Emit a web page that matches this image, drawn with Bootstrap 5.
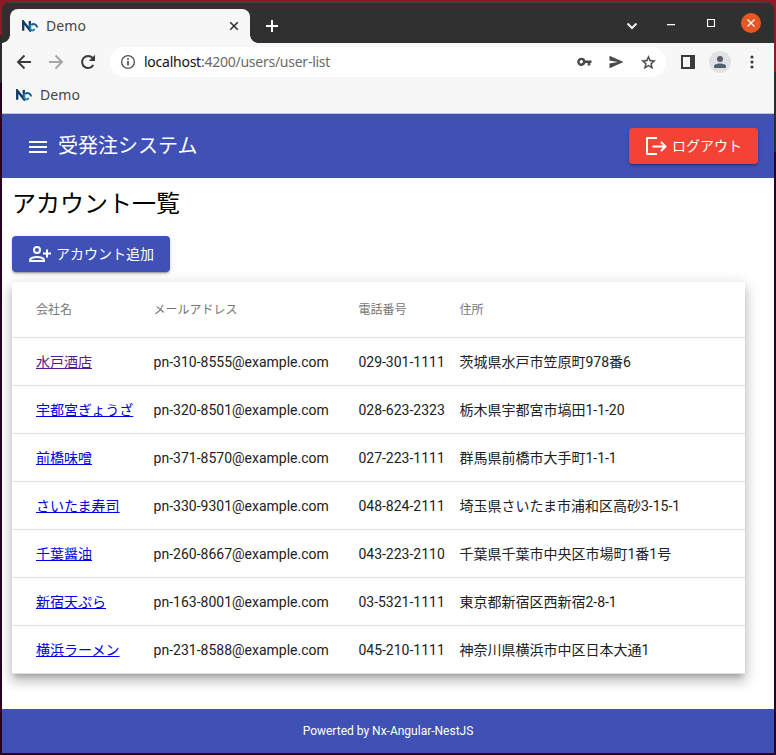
<!DOCTYPE html>
<html lang="ja">
<head>
<meta charset="utf-8">
<title>Demo</title>
<link rel="stylesheet" href="https://cdn.jsdelivr.net/npm/bootstrap@5.3.0/dist/css/bootstrap.min.css">
<style>
body{width:776px;height:755px;padding:2px;overflow:hidden;font-family:Roboto,"Noto Sans CJK JP",sans-serif;
background:linear-gradient(90deg,transparent 50%,#8d1b26 50%) 0 0/100% 72px no-repeat,linear-gradient(90deg,transparent 50%,#2b2b2b 50%) 0 72px/100% 80px no-repeat,linear-gradient(#8d1b26,#8d1b26) 0 0/100% 35px no-repeat,linear-gradient(#2b2b2b,#2b2b2b) 0 35px/100% 48px no-repeat,#28021f}
svg{display:block;flex:none}
.window{height:751px;border-radius:8px 8px 0 0}
.tabstrip{height:41px;background:#303030;border-top:1px solid #444;padding-left:8px}
.tab{width:240px;height:34px;margin-top:6px;background:#f7f7f7;border-radius:8px 8px 0 0;padding:0 11px 0 12px;position:relative}
.tab::before,.tab::after{content:"";position:absolute;bottom:0;width:8px;height:8px}
.tab::before{left:-8px;background:radial-gradient(circle at 0 0,transparent 7.5px,#f7f7f7 8px)}
.tab::after{right:-8px;background:radial-gradient(circle at 100% 0,transparent 7.5px,#f7f7f7 8px)}
.plus{margin:17px 0 0 16px}
.controls{height:40px;padding-right:13px}
.chev{margin:6px 29px 0 0}
.mini{margin:4px 32px 0 0}
.maxi{margin-right:26px}
.ui{font-family:"Noto Sans",sans-serif;font-size:14px;line-height:20px;color:#454746}
.demo-label{letter-spacing:.1px}
.chrome{height:71px;background:#f7f7f7;border-bottom:1px solid #c4c4c4}
.toolbar-row{height:38px;padding:0 14px}
.bookmarks{height:28px;padding-left:14px}
.omnibox{width:556px;height:30px;background:#fff;margin-left:14px;padding:0 9px 0 10px}
.url{margin-left:8px;color:#6a6a6a;letter-spacing:-.25px}
.url b{font-weight:400;color:#111}
.gap17{margin-left:17px}
.avatar{width:22px;height:22px;background:#e1e1e4;margin-left:14px}
.panel{margin-left:15px}
.dots{margin-left:19px}
.close-btn{width:20px;height:20px;background:#e9561f}
.appbar{height:64px;background:#3f51b5;padding:0 16px 0 26px}
.apptitle{font-size:20px;line-height:32px;margin:0 0 0 10px;font-weight:400}
.action{height:36px;border-radius:4px;color:#fff;font-size:14px;line-height:36px;padding:0 16px;box-shadow:0 3px 1px -2px #0003,0 2px 2px #00000024,0 1px 5px #0000001f}
.action:hover{color:#fff}
.action.add{background:#3f51b5;width:158px}
.action.out{background:#f44336;width:129px}
.icon-text{margin-left:4px}
.page{height:531px;padding:10px;background:#fff}
.page h1{font-size:24px;line-height:32px;margin:0 0 16px;color:#000;font-weight:400}
.sheet{width:733px;margin-top:10px;background:#fff;box-shadow:0 5px 5px -3px #0003,0 8px 10px 1px #00000024,0 3px 14px 2px #0000001f}
.accounts{table-layout:fixed;font-size:14px;color:#212121;border-collapse:separate;border-spacing:0}
.accounts th,.accounts td{padding:0;border-bottom:1px solid #e0e0e0;height:48px;vertical-align:middle;white-space:nowrap;line-height:20px}
.accounts th{height:56px;font-size:12px;font-weight:400;color:#757575}
.accounts th:first-child,.accounts td:first-child{padding-left:24px}
.accounts a{color:#00e}
.accounts a.seen{color:#551a8b}
.c1{width:141.600px}.c2{width:204.800px}.c3{width:101px}
.foot{height:44px;background:#3f51b5;font-size:12px;line-height:44px}
</style>
<script src="https://cdn.jsdelivr.net/npm/bootstrap@5.3.0/dist/js/bootstrap.bundle.min.js"></script>
</head>
<body class="m-0">
<svg width="0" height="0" class="position-absolute" aria-hidden="true"><defs>
<symbol id="nx" viewBox="0 0 16 12"><path d="M1.200 10.800V1.500L7.800 10V1" fill="none" stroke="#123a63" stroke-width="2.300"/><path d="M8.300 4.500v4.300c1 2.400 3.700 2.200 4.200 0" fill="none" stroke="#1c82b5" stroke-width="1.900"/><path d="M9.300 5.200c1.500-1.800 5.400-1.600 5.800 2.300" fill="none" stroke="#17608f" stroke-width="2"/></symbol>
</defs></svg>
<div class="window overflow-hidden d-flex flex-column">
 <div class="tabstrip d-flex">
  <div class="tab d-flex align-items-center ui"><svg width="16" height="12"><use href="#nx"/></svg><span class="demo-label ms-2">Demo</span>
   <svg class="ms-auto" width="10" height="10" stroke="#333" stroke-width="1.6"><path d="M1.2 1.200l7.600 7.600M8.800 1.200L1.200 8.800"/></svg></div>
  <svg class="plus" width="12" height="12" stroke="#fff" stroke-width="2"><path d="M6 0v12M0 6h12"/></svg>
  <div class="controls d-flex align-items-center ms-auto">
   <svg class="chev" width="12" height="8" fill="none" stroke="#eee" stroke-width="2"><path d="M1.500 1.500L6 6l4.500-4.500"/></svg>
   <svg class="mini" width="8" height="2"><path d="M0 0h8v1.200H0z" fill="#fff"/></svg>
   <svg class="maxi" width="8" height="8" fill="none" stroke="#fff" stroke-width="1.200"><path d="M.5.5h7v7h-7z"/></svg>
   <div class="close-btn rounded-circle d-flex align-items-center justify-content-center"><svg width="8" height="8" stroke="#fff" stroke-width="1.300"><path d="M.5.5l7 7M7.500.5l-7 7"/></svg></div>
  </div>
 </div>
 <div class="chrome ui">
  <div class="toolbar-row d-flex align-items-center">
   <svg width="16" height="16" fill="none" stroke="#3b3b3b" stroke-width="1.900"><path d="M15 8H2.500M8.500 1.500L2 8l6.500 6.500"/></svg>
   <svg class="ms-3" width="16" height="16" fill="none" stroke="#a5a5a5" stroke-width="1.900"><path d="M1 8h12.500M7.500 1.500L14 8l-6.500 6.500"/></svg>
   <svg class="ms-3" width="16" height="16" fill="none" stroke="#3b3b3b" stroke-width="2"><path d="M13.300 11A6 6 0 1 1 12.600 4"/><path d="M15 .8v6.200H8.800z" fill="#3b3b3b" stroke="none"/></svg>
   <div class="omnibox rounded-pill d-flex align-items-center">
    <svg width="16" height="16" viewBox="0 0 16 16"><circle cx="8" cy="8" r="6.400" fill="none" stroke="#555" stroke-width="1.400"/><path d="M7.200 7h1.600v4.500H7.200zM7.200 4.300h1.600v1.600H7.200z" fill="#444"/></svg>
    <span class="url"><b>localhost</b>:4200/users/user-list</span>
    <svg class="ms-auto" width="15" height="10" viewBox="0 0 15 10" fill="none" stroke="#484848" stroke-width="2"><circle cx="4.300" cy="4.800" r="2.900" stroke-width="2.400"/><path d="M7.500 4.700h7M12 5v3.500" stroke-width="2.600"/></svg>
    <svg class="gap17" width="15" height="14" viewBox="0 0 15 14"><path d="M.5.8L14.500 7 .5 13.200V8.400L9 7 .5 5.600z" fill="#484848"/></svg>
    <svg class="ms-3" width="17" height="17" viewBox="0 0 24 24"><path d="M22 9.240l-7.190-.62L12 2 9.190 8.630 2 9.240l5.460 4.730L5.820 21 12 17.270 18.180 21l-1.630-7.030zM12 15.400l-3.760 2.270 1-4.280-3.320-2.880 4.380-.38L12 6.100l1.710 4.040 4.380.38-3.320 2.880 1 4.280z" fill="#484848" stroke="#484848" stroke-width=".5"/></svg>
   </div>
   <svg class="panel" width="14" height="14"><path d="M0 0h14v14H0zM2 2v10h7V2z" fill="#3b3b3b" fill-rule="evenodd"/></svg>
   <div class="avatar rounded-circle d-flex align-items-center justify-content-center"><svg width="12" height="12" fill="#52606d"><circle cx="6" cy="3" r="3"/><path d="M0 12V10.300C0 8.500 3 7.600 6 7.600s6 .9 6 2.700V12z"/></svg></div>
   <svg class="dots" width="4" height="14" fill="#3b3b3b"><circle cx="2" cy="2" r="1.600"/><circle cx="2" cy="7" r="1.600"/><circle cx="2" cy="12" r="1.600"/></svg>
  </div>
  <div class="bookmarks d-flex align-items-center"><svg width="16" height="12"><use href="#nx"/></svg><span class="demo-label ms-2">Demo</span></div>
 </div>
 <header class="appbar d-flex align-items-center text-white">
  <svg width="20" height="14" style="margin-top:2px"><path d="M1 1h18v2H1zM1 6h18v2H1zM1 11h18v2H1z" fill="#fff"/></svg>
  <h2 class="apptitle">受発注システム</h2>
  <button class="btn border-0 action out ms-auto d-flex align-items-center"><svg width="23" height="20" viewBox="0 0 23 20" fill="none" stroke="#fff" stroke-width="2" stroke-linejoin="round"><path d="M12 2H2v16h10" stroke-width="1.900"/><path d="M7.500 10.500H20M16 6l4.500 4.500L16 15"/></svg><span class="icon-text">ログアウト</span></button>
 </header>
 <main class="page">
  <h1>アカウント一覧</h1>
  <button class="btn border-0 action add d-flex align-items-center"><svg width="24" height="24" viewBox="0 0 24 24" fill="none" stroke="#fff" stroke-width="2"><circle cx="9" cy="8" r="3"/><path d="M2 19v-1c0-2 4-3 7-3s7 1 7 3v1zM19 7.500v8M15 11.500h8"/></svg><span class="icon-text">アカウント追加</span></button>
  <div class="sheet">
   <table class="accounts w-100 mb-0">
    <thead><tr><th class="c1">会社名</th><th class="c2">メールアドレス</th><th class="c3">電話番号</th><th>住所</th></tr></thead>
    <tbody>
     <tr><td><a class="seen" href="#">水戸酒店</a></td><td>pn-310-8555@example.com</td><td>029-301-1111</td><td>茨城県水戸市笠原町978番6</td></tr>
     <tr><td><a href="#">宇都宮ぎょうざ</a></td><td>pn-320-8501@example.com</td><td>028-623-2323</td><td>栃木県宇都宮市塙田1-1-20</td></tr>
     <tr><td><a href="#">前橋味噌</a></td><td>pn-371-8570@example.com</td><td>027-223-1111</td><td>群馬県前橋市大手町1-1-1</td></tr>
     <tr><td><a href="#">さいたま寿司</a></td><td>pn-330-9301@example.com</td><td>048-824-2111</td><td>埼玉県さいたま市浦和区高砂3-15-1</td></tr>
     <tr><td><a href="#">千葉醤油</a></td><td>pn-260-8667@example.com</td><td>043-223-2110</td><td>千葉県千葉市中央区市場町1番1号</td></tr>
     <tr><td><a href="#">新宿天ぷら</a></td><td>pn-163-8001@example.com</td><td>03-5321-1111</td><td>東京都新宿区西新宿2-8-1</td></tr>
     <tr><td><a href="#">横浜ラーメン</a></td><td>pn-231-8588@example.com</td><td>045-210-1111</td><td>神奈川県横浜市中区日本大通1</td></tr>
    </tbody>
   </table>
  </div>
 </main>
 <footer class="foot text-center text-white">Powerted by Nx-Angular-NestJS</footer>
</div>
</body>
</html>
